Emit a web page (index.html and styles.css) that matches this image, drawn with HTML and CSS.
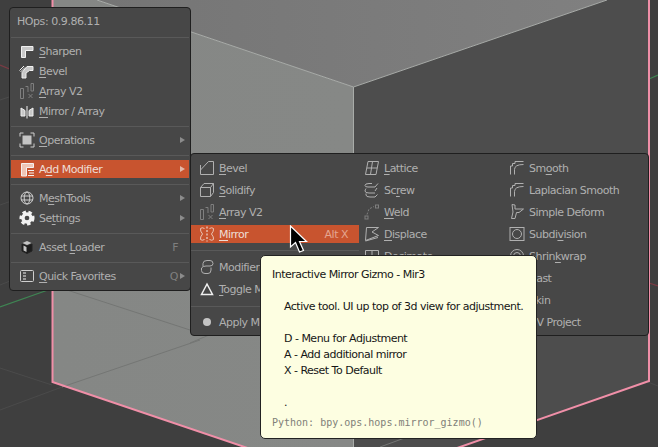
FILE: index.html
```html
<!DOCTYPE html>
<html lang="en">
<head>
<meta charset="utf-8">
<title>HOps menu</title>
<link rel="stylesheet" href="styles.css">
</head>
<body>
<div class="viewport">
  <svg class="scene" viewBox="0 0 658 447" width="658" height="447">
    <defs>
      <linearGradient id="topface" x1="0" y1="0" x2="1" y2="0"><stop offset="0" stop-color="#757575"/><stop offset="1" stop-color="#808080"/></linearGradient>
      <linearGradient id="leftface" x1="0" y1="0" x2="1" y2="0"><stop offset="0" stop-color="#858785"/><stop offset="1" stop-color="#868886"/></linearGradient>
    </defs>
    <rect class="floor" width="658" height="447"/>
    <path class="line-faint" d="M0 368L52 385M0 410L62 387M0 100L60 80M0 205L20 198M0 285L10 281M640 379L658 386M532 338L648 377"/>
    <polygon points="97,0 607,0 353.500,87" fill="url(#topface)"/>
    <polygon points="52,0 97,0 353.500,87 353.500,484 52,382" fill="url(#leftface)"/>
    <polygon points="353.500,87 607,0 649,0 649,381 353.500,484" class="right-face"/>
    <path class="line-faint dark" d="M67 290L190 330M62 387L200 340M190 343L245 320M380 447L440 425"/>
    <path class="edge" d="M97 0L353.500 87L607 0M353.500 87V447"/>
    <path class="axis-red" d="M0 65L12 70M649 283L658 286"/>
    <path class="axis-green" d="M0 307L48 290M649 79L658 75"/>
    <path class="outline" d="M52.500 -2V382L354 484L649 381V-2"/>
  </svg>

  <nav class="menu main-menu">
    <div class="title">HOps: 0.9.86.11</div>
    <div class="sep first"></div>
    <div class="row"><svg class="ic" viewBox="0 0 16 16"><path class="solid" d="M2.500 3.500H14V7.500H6.500V14.500H2.500Z"/></svg><span><u>S</u>harpen</span></div>
    <div class="row"><svg class="ic" viewBox="0 0 16 16"><path class="solid" d="M8 3.500H14V7.500H10.500L7 10V15H3V9.500Z"/><path class="thin bright" d="M0.500 7.500L5 3M1.500 9L6 4.500"/></svg><span><u>B</u>evel</span></div>
    <div class="row"><svg class="ic dim" viewBox="0 0 16 16"><path class="thin" d="M1.500 5.500H4.500V15.500H1.500ZM6.500 3.500H9V9M12 0.500H14.500V8H12ZM9.500 11L13.500 15M13.500 11L9.500 15"/></svg><span><u>A</u>rray V2</span></div>
    <div class="row"><svg class="ic" viewBox="0 0 16 16"><path class="solid" d="M2 5L6 7.500V13H2ZM14 5L10 7.500V13H14Z"/><path class="thin bright" d="M8 3V15.500"/></svg><span><u>M</u>irror / Array</span></div>
    <div class="sep"></div>
    <div class="row"><svg class="ic" viewBox="0 0 16 16"><path class="thin" d="M1 4.500V1H4.500M11.500 1H15V4.500M15 11.500V15H11.500M4.500 15H1V11.500"/><rect class="fill" x="3.500" y="3.500" width="9" height="9"/></svg><span><u>O</u>perations</span><i class="arrow"></i></div>
    <div class="sep"></div>
    <div class="row active"><svg class="ic" viewBox="0 0 16 16"><path class="blush" d="M2.500 2.500H14.500V6.500H7.500V15H2.500Z"/><path class="thin bright" d="M9 9.500H15M10 12H15M9 14.500H15"/></svg><span>A<u>d</u>d Modifier</span><i class="arrow"></i></div>
    <div class="sep"></div>
    <div class="row"><svg class="ic" viewBox="0 0 16 16"><circle class="thin" cx="8" cy="8" r="6"/><ellipse class="thin" cx="8" cy="8" rx="2.800" ry="6"/><path class="thin" d="M2 6H14M2 10H14"/></svg><span>M<u>e</u>shTools</span><i class="arrow"></i></div>
    <div class="row"><svg class="ic gear" viewBox="0 0 16 16"><circle class="gear-teeth" cx="8" cy="8" r="5.800"/><circle class="gear-ring" cx="8" cy="8" r="3.600"/></svg><span>Se<u>t</u>tings</span><i class="arrow"></i></div>
    <div class="sep"></div>
    <div class="row"><svg class="ic" viewBox="0 0 16 16"><path class="cube-side" d="M3 5L8 7L13 5V12L8 14.500L3 12Z"/><path class="fill" d="M3.500 4L8 2L12.500 4L8 6ZM7.500 8V13L4.500 11.500V6.500Z"/></svg><span>Asset <u>L</u>oader</span><em class="key far">F</em></div>
    <div class="sep"></div>
    <div class="row"><svg class="ic" viewBox="0 0 16 16"><rect class="thin" x="1.500" y="2.500" width="13" height="11" rx="1"/><path class="thin bright" d="M4 5H7M4 8H7M4 11H7"/></svg><span><u>Q</u>uick Favorites</span><em class="key">Q</em><i class="arrow"></i></div>
  </nav>

  <nav class="menu sub-menu">
    <div class="col col-a">
      <div class="row"><svg class="ic" viewBox="0 0 16 16"><path class="thin" d="M1.500 10L9.500 1.500H14.500V14.500H1.500ZM1.500 10V5"/></svg><span><u>B</u>evel</span></div>
      <div class="row"><svg class="ic" viewBox="0 0 16 16"><path class="thin" d="M1.500 5.500H11.500V14.500H1.500ZM1.500 5.500L5 1.500H14.500V10.500L11.500 14.500M11.500 5.500L14.500 1.500"/></svg><span><u>S</u>olidify</span></div>
      <div class="row"><svg class="ic dim" viewBox="0 0 16 16"><path class="thin" d="M1.500 5.500H4.500V15.500H1.500ZM6.500 3.500H9V9M12 0.500H14.500V8H12ZM9.500 11L13.500 15M13.500 11L9.500 15"/></svg><span><u>A</u>rray V2</span></div>
      <div class="row active"><svg class="ic" viewBox="0 0 16 16"><path class="thin blushline" d="M5.500 2.500Q3 1 1.500 2.500Q1 5 3.500 8Q1 11 1.500 13.500Q3 15 5.500 13.500M10.500 2.500Q13 1 14.500 2.500Q15 5 12.500 8Q15 11 14.500 13.500Q13 15 10.500 13.500"/><path class="thin bright dashed" d="M8 0.500V15.500"/></svg><span><u>M</u>irror</span><em class="key alt">Alt X</em></div>
      <div class="sep wide"></div>
      <div class="row"><svg class="ic" viewBox="0 0 16 16"><path class="thin" d="M4 7.500V4.500Q4 1.500 8 1.500H11Q14 1.500 14 4.500Q14 7 11 7H7Q4 7 2.500 9V11.500Q2.500 14.500 6 14.500H9Q12 14.500 12 11V8.500"/></svg><span>Modifier Stack</span></div>
      <div class="row"><svg class="ic" viewBox="0 0 16 16"><path class="thick" d="M8 3L13.500 13.500H2.500Z"/></svg><span><u>T</u>oggle Modifiers</span></div>
      <div class="sep wide low"></div>
      <div class="row"><svg class="ic" viewBox="0 0 16 16"><circle class="fill" cx="8" cy="8" r="4"/></svg><span>Apply Modifiers</span></div>
    </div>
    <div class="col">
      <div class="row"><svg class="ic" viewBox="0 0 16 16"><path class="thin" d="M4 1.500H14.500L12 14.500H1.500ZM8.500 1.500L6.500 14.500M2.800 8H13.200"/></svg><span><u>L</u>attice</span></div>
      <div class="row"><svg class="ic" viewBox="0 0 16 16"><path class="thin" d="M14 1.500L11 5H4Q1 5 1 3.500Q1 1.500 5 1.500H8M2 6.500Q1 8 1 9Q1 11 5 11H11M13 6L11 9M2 11.500V13Q2 15 6 15H11L13.500 12.500"/></svg><span>Sc<u>r</u>ew</span></div>
      <div class="row"><svg class="ic dim" viewBox="0 0 16 16"><rect class="thin" x="11.500" y="1" width="3" height="3"/><rect class="thin" x="1" y="12" width="3" height="3"/><path class="thin dashed" d="M3 10.500L5 5L10 2.500"/></svg><span><u>W</u>eld</span></div>
      <div class="row"><svg class="ic" viewBox="0 0 16 16"><path class="thin" d="M2.500 1.500H14.500L8 6L14.500 9.500L1.500 14.500ZM1.500 15L14 11.500"/></svg><span><u>D</u>isplace</span></div>
      <div class="row"><svg class="ic" viewBox="0 0 16 16"><path class="thin" d="M1.500 2.500H14.500V14.500H1.500ZM8 2.500V14.500M1.500 8H14.500"/></svg><span>Decimate</span></div>
    </div>
    <div class="col">
      <div class="row"><svg class="ic" viewBox="0 0 16 16"><path class="thin" d="M1.500 14.500V6H3.500V3.500H6V1.500H14.500M5.500 14.500V9.500Q5.500 4.500 14.500 4.500"/></svg><span>Sm<u>o</u>oth</span></div>
      <div class="row"><svg class="ic" viewBox="0 0 16 16"><path class="thin" d="M1.500 14.500V6H3.500V3.500H6V1.500H14.500M5.500 14.500V9.500Q5.500 4.500 14.500 4.500"/></svg><span>Laplacian Smooth</span></div>
      <div class="row"><svg class="ic" viewBox="0 0 16 16"><path class="thin" d="M3 0.500L6 1V5H14.500L10 8.500H7.500L6 14.500H2.500L4 8Z"/></svg><span>Simple Deform</span></div>
      <div class="row"><svg class="ic" viewBox="0 0 16 16"><rect class="thin" x="1" y="1.500" width="14" height="13"/><circle class="thin" cx="8" cy="8" r="4.500"/></svg><span>Subdi<u>v</u>ision</span></div>
      <div class="row"><svg class="ic" viewBox="0 0 16 16"><circle class="thin" cx="8" cy="8" r="6.500"/><circle class="thin" cx="8" cy="8" r="3.500"/></svg><span>Shrin<u>k</u>wrap</span></div>
      <div class="row"><svg class="ic" viewBox="0 0 16 16"><circle class="thin" cx="8" cy="8" r="6"/></svg><span>Cast</span></div>
      <div class="row"><svg class="ic" viewBox="0 0 16 16"><path class="thin" d="M2 2H14V14H2Z"/></svg><span>Skin</span></div>
      <div class="row"><svg class="ic" viewBox="0 0 16 16"><path class="thin" d="M2 2H14V14H2Z"/></svg><span>UV Project</span></div>
    </div>
  </nav>

  <aside class="tooltip">
    <p class="tip-line">Interactive Mirror Gizmo - Mir3</p>
    <p class="tip-line"></p>
    <p class="tip-line indent">Active tool. UI up top of 3d view for adjustment.</p>
    <p class="tip-line"></p>
    <p class="tip-line indent">D - Menu for Adjustment</p>
    <p class="tip-line indent">A - Add additional mirror</p>
    <p class="tip-line indent">X - Reset To Default</p>
    <p class="tip-line"></p>
    <p class="tip-line indent">.</p>
    <p class="tip-code">Python: bpy.ops.hops.mirror_gizmo()</p>
  </aside>

  <svg class="cursor" viewBox="0 0 20 30" width="20" height="30"><path d="M1.500 1V22L6.500 17.500L10.500 27L14.500 25.500L10.500 16.500H17.500Z"/></svg>
</div>
</body>
</html>
```
FILE: styles.css
```css
* { box-sizing: border-box; }
html, body { margin: 0; padding: 0; }
body { background: #3f3f3f; font-family: "DejaVu Sans", sans-serif; font-size: 11px; letter-spacing: -0.51px; }
.viewport { position: relative; width: 658px; height: 447px; overflow: hidden; }

.scene { position: absolute; left: 0; top: 0; display: block; }
.floor { fill: #3f3f3f; }
.right-face { fill: #4d4d4d; }
.edge { fill: none; stroke: #a9aca9; stroke-width: 1; }
.line-faint { fill: none; stroke: #4b4b4b; stroke-width: 1; }
.line-faint.dark { stroke: #747674; }
.axis-red { fill: none; stroke: #7c3b44; stroke-width: 1.200; }
.axis-green { fill: none; stroke: #3f8553; stroke-width: 1.200; }
.outline { fill: none; stroke: #f08fa8; stroke-width: 2; }

.menu {
  position: absolute;
  background: #474747;
  border: 1px solid #1f1f1f;
  border-radius: 4px;
  color: #b0b0b0;
}
.main-menu { left: 9px; top: 7px; width: 182px; height: 284px; }
.sub-menu {
  left: 190px; top: 153px; width: 459px; height: 183px; padding-top: 3px;
  display: grid; grid-template-columns: 168px 145px 1fr; align-items: start;
}

.title { height: 29px; padding-left: 7px; line-height: 27px; color: #b0b0b0; letter-spacing: -0.44px; }
.sep { height: 9px; margin: 0 1px; padding-top: 5px; }
.sep::before { content: ""; display: block; height: 1px; background: #595959; }
.sep.first { height: 4px; padding-top: 0; }

.row {
  display: flex; align-items: center; height: 20px; margin: 0 1px; padding: 0 4px 0 8px;
  border-block: 1px solid transparent; background-clip: padding-box; white-space: nowrap;
}
.row span { margin-left: 4px; }
.row u { text-decoration: underline; text-underline-offset: 2px; text-decoration-thickness: 1px; }
.active { background-color: #c8542f; color: #eeddd5; }
.ic { width: 16px; height: 16px; flex: none; display: block; }

.sub-menu .row { height: 22px; margin: 0; padding-left: 5px; border-block-width: 2px; }
.sub-menu .col-a .row { padding-left: 8px; }
.sub-menu .sep { margin: 0; }
.sep.wide { height: 11px; padding-top: 5px; }
.sep.low { height: 11px; padding-top: 6px; }

.key { margin-left: auto; font-style: normal; color: #7f7f7f; padding-right: 2px; }
.key.far { padding-right: 7px; }
.key.alt { padding-right: 7px; }
.active .key { color: #e4a58f; }
.arrow {
  width: 0; height: 0; margin-left: auto;
  border-left: 5px solid #8c8c8c; border-top: 3px solid transparent; border-bottom: 3px solid transparent;
}
.key + .arrow { margin-left: 0; }
.active .arrow { border-left-color: #e2b8a8; }

.solid { fill: #c8c8c8; stroke: #f0f0f0; stroke-width: 1; }
.blush { fill: #efc6b6; stroke: #f5f0ee; stroke-width: 1; }
.thin { fill: none; stroke: #b0b0b0; stroke-width: 1; }
.main-menu .thin { stroke: #cfcfcf; }
.main-menu .dim .thin, .dim .thin { stroke: #7f7f7f; }
.thin.bright, .main-menu .thin.bright { stroke: #f2f2f2; }
.thin.blushline { stroke: #e9c4b6; }
.thick { fill: none; stroke: #f0f0f0; stroke-width: 1.500; }
.fill { fill: #c4c4c4; stroke: none; }
.dashed { stroke-dasharray: 2 1.500; }
.gear-teeth { fill: #f2f2f2; stroke: #f2f2f2; stroke-width: 3.500; stroke-dasharray: 3.200 2.400; }
.gear-ring { fill: #474747; stroke: #f2f2f2; stroke-width: 2.500; }
.cube-side { fill: #1c1c1c; stroke: #222; stroke-width: 1; }

.tooltip {
  position: absolute; left: 260px; top: 255px; width: 277px; height: 184px;
  background: #fdfee1; border: 1px solid #222; border-radius: 5px;
  padding: 11px 0 0 11px; color: #161616;
}
.tip-line { margin: 0; height: 16px; line-height: 16px; white-space: pre; }
.tip-line.indent { padding-left: 12px; }
.tip-code {
  margin: 4px 0 0; height: 16px; line-height: 16px; color: #7f7f78; letter-spacing: 0;
  font-family: "DejaVu Sans Mono", monospace; font-size: 10px; white-space: pre;
}

.cursor { position: absolute; left: 289px; top: 225px; display: block; }
.cursor path { fill: #000; stroke: #fff; stroke-width: 1.200; }
```
